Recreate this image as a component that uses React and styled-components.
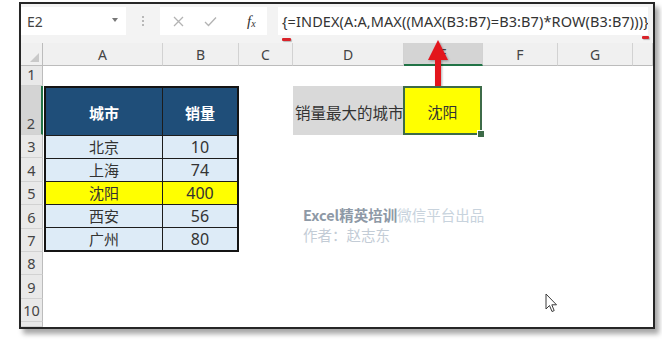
import React from 'react';
import styled, { createGlobalStyle } from 'styled-components';

const Global = createGlobalStyle`
  html, body { margin: 0; padding: 0; background: #ffffff; }
  body { font-family: "Noto Sans", "Noto Sans CJK SC", sans-serif; }
`;

const Page = styled.div`
  width: 662px;
  height: 340px;
  padding: 2px 0 0 19px;
  box-sizing: border-box;
  overflow: hidden;
  background: #fff;
`;

const Frame = styled.div`
  position: relative;
  width: 636px;
  height: 327px;
  box-sizing: border-box;
  border: 2px solid #262626;
  background: #fff;
  box-shadow: 4px 5px 5px rgba(0, 0, 0, 0.35);
  display: flex;
  flex-direction: column;
  overflow: hidden;
`;

const FormulaBar = styled.div`
  height: 39px;
  box-sizing: border-box;
  padding: 3px 0 8px 0;
  background: #f3f3f3;
  display: flex;
  align-items: stretch;
`;

const NameBox = styled.div`
  width: 105px;
  background: #fff;
  display: flex;
  align-items: center;
  justify-content: space-between;
  padding: 0 8px 0 6px;
  box-sizing: border-box;
  font: 14px "Noto Sans", sans-serif;
  color: #444;
`;

const Caret = styled.span`
  width: 0;
  height: 0;
  border-left: 3.5px solid transparent;
  border-right: 3.5px solid transparent;
  border-top: 4px solid #777;
  margin-top: -3px;
`;

const Separator = styled.div`
  width: 34px;
  display: flex;
  flex-direction: column;
  align-items: center;
  justify-content: center;
  gap: 2px;
`;

const Dot = styled.span`
  width: 2px;
  height: 2px;
  background: #b8b8b8;
`;

const ButtonBox = styled.div`
  width: 107px;
  background: #fff;
  display: flex;
  align-items: center;
  padding-left: 13px;
  box-sizing: border-box;
  gap: 20px;
`;

const Fx = styled.span`
  margin-left: 10px;
  font: italic 15px "Liberation Serif", serif;
  color: #333;
  & sub {
    font-size: 10px;
    vertical-align: baseline;
    position: relative;
    top: 1px;
  }
`;

const FormulaInput = styled.div`
  width: 370px;
  margin-left: 11px;
  background: #fff;
  display: flex;
  align-items: center;
  padding-left: 4px;
  box-sizing: border-box;
  font: 14.5px "Noto Sans", sans-serif;
  letter-spacing: 0.1px;
  color: #333;
  white-space: nowrap;
  overflow: hidden;
`;

const Sheet = styled.div`
  flex: 1;
  display: grid;
  grid-template-columns: 22px 120px 76px 54px 111px 79px 75px 75px 1fr;
  grid-template-rows: 23px 20px 49px repeat(8, 23.4px) 1fr;
  background: #fff;
  font-family: "Noto Sans CJK SC", sans-serif;
`;

const Corner = styled.div`
  grid-row: 1;
  grid-column: 1;
  background: #f0f0f0;
  border-right: 1px solid #bcbcbc;
  border-bottom: 1px solid #bcbcbc;
  box-sizing: border-box;
  position: relative;
  &::after {
    content: "";
    position: absolute;
    right: 3px;
    bottom: 3px;
    width: 0;
    height: 0;
    border-left: 9px solid transparent;
    border-bottom: 9px solid #c9c9c9;
  }
`;

const ColHead = styled.div`
  grid-row: 1;
  background: ${p => (p.$sel ? '#d4d4d4' : '#f0f0f0')};
  border-right: 1px solid #d2d2d2;
  border-bottom: ${p => (p.$sel ? '2px solid #217346' : '1px solid #bcbcbc')};
  box-sizing: border-box;
  display: flex;
  align-items: center;
  justify-content: center;
  font: 14px "Noto Sans", sans-serif;
  color: #444;
`;

const RowHead = styled.div`
  grid-column: 1;
  grid-row: ${p => p.$row};
  background: ${p => (p.$sel ? '#d4d4d4' : '#e9e9e9')};
  border-right: ${p => (p.$sel ? '2px solid #217346' : '1px solid #bcbcbc')};
  border-bottom: 1px solid #d2d2d2;
  box-sizing: border-box;
  display: flex;
  align-items: flex-end;
  justify-content: center;
  padding-bottom: 1px;
  font: 14.5px "Noto Sans", sans-serif;
  line-height: 20px;
  color: #444;
`;

const Table = styled.div`
  grid-column: 2 / 4;
  grid-row: 3 / 9;
  display: grid;
  grid-template-columns: 1fr 74px;
  grid-template-rows: 47px repeat(5, 1fr);
  gap: 1px;
  background: #1c1c1c;
  border: 2px solid #141414;
  margin-left: 1px;
  box-sizing: border-box;
`;

const cellBg = { head: '#1f4e79', data: '#ddebf7', hl: '#ffff00' };

const TCell = styled.div`
  background: ${p => cellBg[p.$kind]};
  color: ${p => (p.$kind === 'head' ? '#ffffff' : '#333333')};
  font-weight: ${p => (p.$kind === 'head' ? 700 : 400)};
  font-size: ${p => (p.$num ? '16px' : '15px')};
  font-family: ${p => (p.$num ? '"Noto Sans", sans-serif' : '"Noto Sans CJK SC", sans-serif')};
  display: flex;
  align-items: center;
  justify-content: center;
  padding-top: ${p => (p.$kind === 'head' ? '2px' : '0')};
  box-sizing: border-box;
  line-height: 1;
`;

const Label = styled.div`
  grid-column: 5;
  grid-row: 3;
  background: #d9d9d9;
  display: flex;
  align-items: center;
  padding: 2px 0 0 2px;
  box-sizing: border-box;
  white-space: nowrap;
  font-size: 15.5px;
  color: #333;
  position: relative;
  z-index: 0;
`;

const Result = styled.div`
  grid-column: 6;
  grid-row: 3;
  position: relative;
  z-index: 1;
  margin-left: -1px;
  margin-right: 1px;
  background: #ffff00;
  border: 2px solid #3d6b48;
  box-sizing: border-box;
  display: flex;
  align-items: center;
  justify-content: center;
  padding-top: 2px;
  font-size: 15px;
  color: #333;
`;

const FillHandle = styled.span`
  position: absolute;
  right: -5px;
  bottom: -5px;
  width: 6px;
  height: 6px;
  background: #3d6b48;
  border: 1px solid #fff;
`;

const Watermark = styled.div`
  grid-column: 5 / 10;
  grid-row: 7 / 9;
  padding: 0 0 0 10px;
  font-size: 14.5px;
  line-height: 20px;
  white-space: nowrap;
`;

const Brand = styled.span`
  color: #8e99a6;
  font-weight: 700;
`;

const Faint = styled.span`
  color: ${p => p.$tone || '#c8d3dd'};
`;

const RedMark = styled.span`
  position: absolute;
  left: ${p => p.$x}px;
  top: ${p => p.$y}px;
  width: ${p => p.$w}px;
  height: 3px;
  background: #d9232a;
  border-radius: 1px;
  box-shadow: 1px 1px 1px rgba(0, 0, 0, 0.25);
`;

const Overlay = styled.svg`
  position: absolute;
  left: ${p => p.$x}px;
  top: ${p => p.$y}px;
  overflow: visible;
`;

const cols = ['A', 'B', 'C', 'D', 'E', 'F', 'G', ''];
const rows = [1, 2, 3, 4, 5, 6, 7, 8, 9, 10, ''];
const data = [
  ['北京', '10', 'data'],
  ['上海', '74', 'data'],
  ['沈阳', '400', 'hl'],
  ['西安', '56', 'data'],
  ['广州', '80', 'data'],
];

export default function App() {
  return (
    <>
      <Global />
      <Page>
        <Frame>
          <FormulaBar>
            <NameBox>
              <span>E2</span>
              <Caret />
            </NameBox>
            <Separator>
              <Dot />
              <Dot />
              <Dot />
            </Separator>
            <ButtonBox>
              <svg width="11" height="11" viewBox="0 0 11 11">
                <path d="M1 1L10 10M10 1L1 10" stroke="#b3b3b3" strokeWidth="1.3" fill="none" />
              </svg>
              <svg width="13" height="11" viewBox="0 0 13 11">
                <path d="M1 6L4.5 9.5L12 1.5" stroke="#b3b3b3" strokeWidth="1.3" fill="none" />
              </svg>
              <Fx>
                f<sub>x</sub>
              </Fx>
            </ButtonBox>
            <FormulaInput>{'{=INDEX(A:A,MAX((MAX(B3:B7)=B3:B7)*ROW(B3:B7)))}'}</FormulaInput>
          </FormulaBar>

          <Sheet>
            <Corner />
            {cols.map((c, i) => (
              <ColHead key={'c' + i} $sel={c === 'E'}>
                {c}
              </ColHead>
            ))}
            {rows.map((r, i) => (
              <RowHead key={'r' + i} $row={i + 2} $sel={r === 2}>
                {r}
              </RowHead>
            ))}

            <Table>
              <TCell $kind="head">城市</TCell>
              <TCell $kind="head">销量</TCell>
              {data.map(([city, val, kind]) => (
                <React.Fragment key={city}>
                  <TCell $kind={kind}>{city}</TCell>
                  <TCell $kind={kind} $num>
                    {val}
                  </TCell>
                </React.Fragment>
              ))}
            </Table>

            <Label>销量最大的城市</Label>
            <Result>
              沈阳
              <FillHandle />
            </Result>

            <Watermark>
              <div>
                <Brand>Excel精英培训</Brand>
                <Faint>微信平台出品</Faint>
              </div>
              <div>
                <Faint $tone="#c3ccd6">作者：赵志东</Faint>
              </div>
            </Watermark>
          </Sheet>

          <RedMark $x={261} $y={34} $w={9} />
          <RedMark $x={621} $y={32} $w={7} />

          <Overlay $x={405} $y={36} width="24" height="50" viewBox="0 0 24 50">
            <defs>
              <filter id="sh" x="-30%" y="-10%" width="160%" height="130%">
                <feDropShadow dx="1" dy="1" stdDeviation="0.8" floodColor="#000" floodOpacity="0.3" />
              </filter>
            </defs>
            <g filter="url(#sh)" fill="#e3141b">
              <polygon points="12,0 22,20 2,20" />
              <rect x="9" y="19" width="6" height="31" />
            </g>
          </Overlay>

          <Overlay $x={524} $y={289} width="13" height="21" viewBox="0 0 13 21">
            <path
              d="M1 1 L1 16 L4.5 12.5 L7 18.5 L9.2 17.6 L6.8 11.8 L11.5 11.8 Z"
              fill="#ffffff"
              stroke="#3a3a3a"
              strokeWidth="1"
              strokeLinejoin="round"
            />
          </Overlay>
        </Frame>
      </Page>
    </>
  );
}
